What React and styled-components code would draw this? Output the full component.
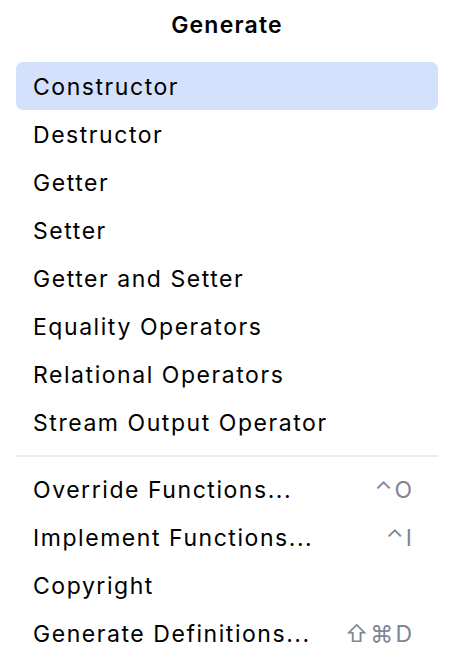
import styled, { createGlobalStyle } from "styled-components";

const GlobalStyle = createGlobalStyle`
    html, body {
        margin: 0;
        padding: 0;
        background: #ffffff;
    }
    body {
        font-family: Inter, "Noto Sans", sans-serif;
        color: #000000;
    }
`

const Popup = styled.div`
    width: 450px;
    height: 659px;
    box-sizing: border-box;
    padding: 0 12px 0 16px;
    display: flex;
    flex-direction: column;
    overflow: hidden;
`

const Title = styled.div`
    height: 62px;
    display: flex;
    align-items: center;
    justify-content: center;
    padding-bottom: 13px;
    box-sizing: border-box;
    font-size: 23px;
    font-weight: 600;
    letter-spacing: 1.2px;
`

const List = styled.div`
    display: flex;
    flex-direction: column;
`

const Row = styled.div`
    height: 48px;
    box-sizing: border-box;
    padding: 2px 24px 0 17px;
    display: flex;
    align-items: center;
    justify-content: space-between;
    border-radius: 7px;
    font-size: 23px;
    letter-spacing: 1.55px;
    background: ${p => (p.$selected ? "#d4e1fc" : "transparent")};
`

const Shortcut = styled.span`
    color: #818594;
    font-size: 23px;
    letter-spacing: 2px;
`

const Separator = styled.div`
    height: 19px;
    display: flex;
    align-items: center;
    &::after {
        content: "";
        flex: 1;
        height: 2px;
        background: #ebecf0;
    }
`

const top = [
    "Constructor",
    "Destructor",
    "Getter",
    "Setter",
    "Getter and Setter",
    "Equality Operators",
    "Relational Operators",
    "Stream Output Operator",
]

const bottom = [
    { label: "Override Functions...", key: "⌃O" },
    { label: "Implement Functions...", key: "⌃I" },
    { label: "Copyright" },
    { label: "Generate Definitions...", key: "⇧⌘D" },
]

const App = () => {
    return (
        <>
            <GlobalStyle />
            <Popup>
                <Title>Generate</Title>
                <List>
                    {top.map((label, i) => (
                        <Row key={label} $selected={i === 0}>{label}</Row>
                    ))}
                </List>
                <Separator />
                <List>
                    {bottom.map(item => (
                        <Row key={item.label}>
                            <span>{item.label}</span>
                            {item.key && <Shortcut>{item.key}</Shortcut>}
                        </Row>
                    ))}
                </List>
            </Popup>
        </>
    )
}

export default App
